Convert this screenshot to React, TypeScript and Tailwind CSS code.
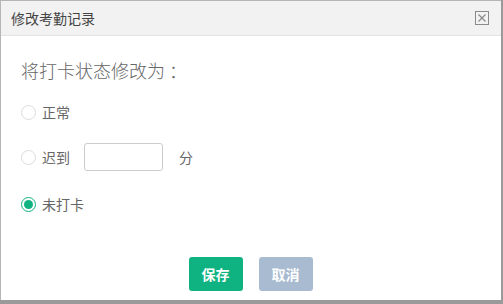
import React from "react";

const font = { fontFamily: '"Noto Sans CJK SC", "Liberation Sans", sans-serif' };

function Radio({ checked }: { checked?: boolean }) {
  return checked ? (
    <span className="flex h-[15px] w-[15px] items-center justify-center rounded-full border-[1.5px] border-[#12b382] bg-white">
      <span className="h-[9px] w-[9px] rounded-full bg-[#12b382]" />
    </span>
  ) : (
    <span className="h-[15px] w-[15px] rounded-full border border-[#dcdcdc] bg-white" />
  );
}

export default function App() {
  return (
    <div className="h-[304px] w-[503px] bg-[#9a9a9a]" style={font}>
      <div className="flex h-[300px] w-[501px] flex-col border-l border-t border-[#b5b5b5] bg-white">
        <div className="flex h-[35px] items-center justify-between border-b border-[#e3e3e3] bg-[#f2f2f2] pl-[10px] pr-[12px]">
          <span className="text-[14px] text-[#444]">修改考勤记录</span>
          <svg width="14" height="14" viewBox="0 0 14 14">
            <rect x="0.5" y="0.5" width="13" height="13" fill="none" stroke="#8a8a8a" strokeWidth="1" />
            <path d="M3.5 3.5 L10.5 10.5 M10.5 3.5 L3.5 10.5" stroke="#8a8a8a" strokeWidth="1.2" />
          </svg>
        </div>
        <div className="flex flex-1 flex-col pl-[20px]">
          <div className="mt-[22px] h-[24px] text-[18px] font-light leading-[24px] text-[#666]">将打卡状态修改为 ：</div>
          <div className="mt-[16px] flex h-[28px] items-center gap-[6px] text-[14px] text-[#666]">
            <Radio />
            <span>正常</span>
          </div>
          <div className="mt-[17px] flex h-[28px] items-center text-[14px] text-[#666]">
            <Radio />
            <span className="ml-[6px]">迟到</span>
            <span className="ml-[14px] h-[28px] w-[79px] rounded-[3px] border border-[#ccc]" />
            <span className="ml-[16px]">分</span>
          </div>
          <div className="mt-[19px] flex h-[28px] items-center gap-[6px] text-[14px] text-[#666]">
            <Radio checked />
            <span>未打卡</span>
          </div>
          <div className="mt-[39px] flex justify-center gap-[16px] pr-[21px]">
            <button className="h-[34px] w-[54px] rounded-[3px] bg-[#0fb381] text-[14px] font-bold text-white">保存</button>
            <button className="h-[34px] w-[54px] rounded-[3px] bg-[#a8bbd0] text-[14px] font-bold text-white">取消</button>
          </div>
        </div>
      </div>
    </div>
  );
}
